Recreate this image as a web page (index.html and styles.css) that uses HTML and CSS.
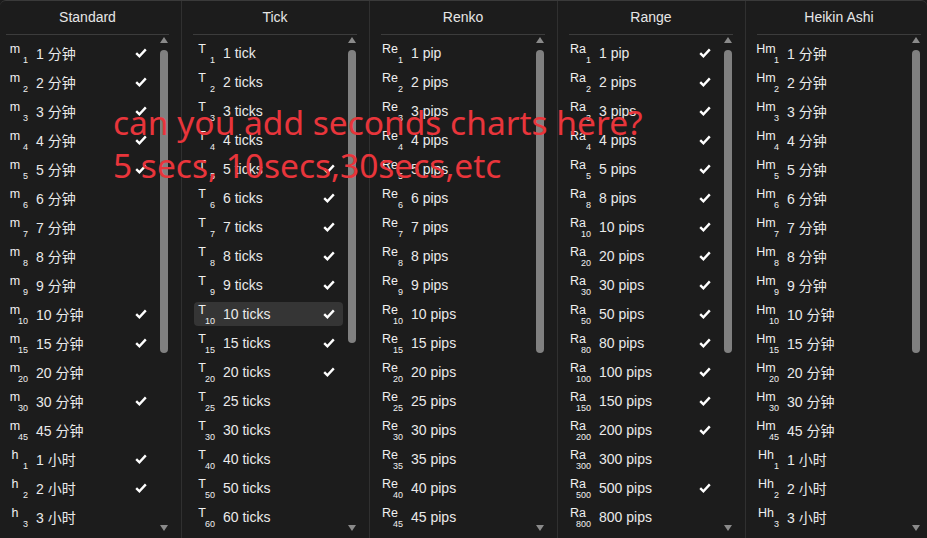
FILE: index.html
```html
<!DOCTYPE html>
<html>

<head>
    <meta http-equiv="Content-Type" content="text/html;charset=UTF-8">
    <title>Chart types</title>
    <link rel="stylesheet" href="styles.css">
</head>

<body>
    <div class="panel">
        <section class="col col-first">
            <div class="col-head">Standard</div>
            <div class="col-body">
                <ul class="list" id="standard"></ul>
                <div class="scroll"><span class="arr up"></span><span class="thumb"></span><span class="arr down"></span></div>
            </div>
        </section>
        <section class="col">
            <div class="col-head">Tick</div>
            <div class="col-body">
                <ul class="list" id="tick"></ul>
                <div class="scroll"><span class="arr up"></span><span class="thumb thumb-short"></span><span class="arr down"></span></div>
            </div>
        </section>
        <section class="col">
            <div class="col-head">Renko</div>
            <div class="col-body">
                <ul class="list" id="renko"></ul>
                <div class="scroll"><span class="arr up"></span><span class="thumb"></span><span class="arr down"></span></div>
            </div>
        </section>
        <section class="col">
            <div class="col-head">Range</div>
            <div class="col-body">
                <ul class="list" id="range"></ul>
                <div class="scroll"><span class="arr up"></span><span class="thumb"></span><span class="arr down"></span></div>
            </div>
        </section>
        <section class="col col-last">
            <div class="col-head">Heikin Ashi</div>
            <div class="col-body">
                <ul class="list" id="heikin"></ul>
                <div class="scroll"><span class="arr up"></span><span class="thumb"></span><span class="arr down"></span></div>
            </div>
        </section>

        <p class="note">can you add seconds charts here?<br>5 secs, 10secs,30secs,etc</p>
    </div>

    <script>
        var check = '<svg class="chk" width="12" height="10" viewBox="0 0 12 10"><path d="M1.2 5.2 L4.4 8.3 L10.8 1.4" fill="none" stroke="#fff" stroke-width="2.4"/></svg>';

        // [letter, subscript, label, checked]
        var mins = [1, 2, 3, 4, 5, 6, 7, 8, 9, 10, 15, 20, 30, 45];
        var hours = [1, 2, 3];

        var standard = [];
        var stdChecked = [1, 2, 3, 4, 5, 10, 15, 30];
        mins.forEach(function (n) { standard.push(['m', n, n + ' 分钟', stdChecked.indexOf(n) > -1]); });
        hours.forEach(function (n) { standard.push(['h', n, n + ' 小时', n < 3]); });

        var tick = [];
        [1, 2, 3, 4, 5, 6, 7, 8, 9, 10, 15, 20, 25, 30, 40, 50, 60].forEach(function (n) {
            tick.push(['T', n, n + (n == 1 ? ' tick' : ' ticks'), n >= 5 && n <= 20]);
        });

        var renko = [];
        [1, 2, 3, 4, 5, 6, 7, 8, 9, 10, 15, 20, 25, 30, 35, 40, 45].forEach(function (n) {
            renko.push(['Re', n, n + (n == 1 ? ' pip' : ' pips'), false]);
        });

        var range = [];
        [1, 2, 3, 4, 5, 8, 10, 20, 30, 50, 80, 100, 150, 200, 300, 500, 800].forEach(function (n) {
            range.push(['Ra', n, n + (n == 1 ? ' pip' : ' pips'), n != 300 && n != 800]);
        });

        var heikin = [];
        mins.forEach(function (n) { heikin.push(['Hm', n, n + ' 分钟', false]); });
        hours.forEach(function (n) { heikin.push(['Hh', n, n + ' 小时', false]); });

        function fill(id, rows, active) {
            var html = '';
            rows.forEach(function (r, i) {
                html += '<li class="item' + (i === active ? ' item-on' : '') + '">' +
                    '<span class="ico"><span class="ico-l">' + r[0] + '</span><span class="ico-s">' + r[1] + '</span></span>' +
                    '<span class="lbl">' + r[2] + '</span>' + (r[3] ? check : '') + '</li>';
            });
            document.getElementById(id).innerHTML = html;
        }

        fill('standard', standard, -1);
        fill('tick', tick, 9);
        fill('renko', renko, -1);
        fill('range', range, -1);
        fill('heikin', heikin, -1);
    </script>
</body>

</html>
```

FILE: styles.css
```css
* {
    box-sizing: border-box;
    margin: 0;
    padding: 0;
}

body {
    width: 927px;
    height: 538px;
    overflow: hidden;
    background: #1c1c1c;
    font-family: "Liberation Sans", Arial, "Noto Sans CJK SC", sans-serif;
    color: #e8e8e8;
}

.panel {
    position: relative;
    display: grid;
    grid-template-columns: 181px 188px 188px 188px 182px;
    height: 538px;
    background: #1c1c1c;
    border-top: 1px solid #3a3a3a;
    border-radius: 6px 6px 0 0;
    overflow: hidden;
}

.col {
    display: flex;
    flex-direction: column;
    min-height: 0;
    padding: 0 12px 0 11px;
    border-left: 1px solid #303030;
}

.col-first {
    border-left: none;
    padding-left: 6px;
}

.col-last {
    padding-right: 6px;
}

.col-head {
    height: 34px;
    line-height: 32px;
    font-size: 14px;
    text-align: center;
    color: #e6e6e6;
    border-bottom: 1px solid #3c3c3c;
}

.col-body {
    flex: 1;
    display: flex;
    min-height: 0;
}

.list {
    flex: 1;
    min-width: 0;
    list-style: none;
    padding: 6px 0 0 1px;
    display: flex;
    flex-direction: column;
    gap: 5px;
}

.item {
    flex: none;
    height: 24px;
    display: flex;
    align-items: center;
    border-radius: 4px;
}

.item-on {
    background: #353535;
}

.ico {
    flex: none;
    width: 29px;
    align-self: flex-start;
    padding-top: 2px;
    display: grid;
    grid-template-columns: 16px 5px 8px;
    color: #f0f0f0;
}

.ico-l {
    grid-column: 1;
    grid-row: 1;
    justify-self: center;
    font-size: 12.5px;
    line-height: 13px;
    white-space: nowrap;
}

.ico-s {
    grid-column: 1 / 3;
    grid-row: 2;
    justify-self: end;
    font-size: 9px;
    line-height: 9px;
}

.lbl {
    font-size: 14px;
    color: #eaeaea;
    white-space: nowrap;
}

.chk {
    flex: none;
    margin-left: auto;
    margin-right: 8px;
}

.scroll {
    flex: none;
    width: 14px;
    display: flex;
    flex-direction: column;
    align-items: flex-end;
    padding: 2px 1px 7px 0;
}

.arr {
    width: 0;
    height: 0;
    border-left: 4px solid transparent;
    border-right: 4px solid transparent;
}

.up {
    border-bottom: 6px solid #8a8a8a;
}

.down {
    margin-top: auto;
    border-top: 6px solid #8a8a8a;
}

.thumb {
    width: 8px;
    height: 303px;
    margin-top: 7px;
    border-radius: 4px;
    background: #808080;
}

.thumb-short {
    height: 293px;
}

.note {
    position: absolute;
    left: 113px;
    top: 100px;
    font-family: "Noto Sans", sans-serif;
    font-size: 33.5px;
    line-height: 43px;
    color: #e8353b;
    white-space: nowrap;
}
```
